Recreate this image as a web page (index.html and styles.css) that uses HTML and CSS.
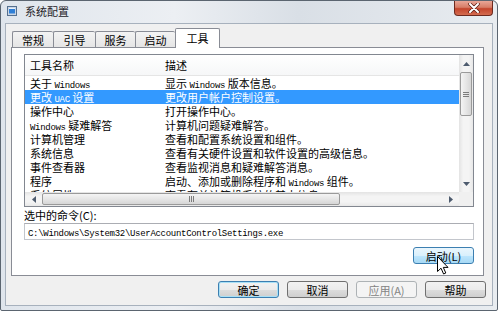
FILE: index.html
```html
<!DOCTYPE html>
<html lang="zh-CN">
<head>
    <meta charset="UTF-8">
    <title>系统配置</title>
    <link rel="stylesheet" href="styles.css">
</head>
<body>
    <div class="window">
        <div class="titlebar">
            <svg class="app-icon" width="10" height="10" viewBox="0 0 10 10">
                <rect x="0.5" y="0.5" width="9" height="9" fill="#c9d6e6" stroke="#55708f"/>
                <rect x="2" y="2.5" width="6" height="5" fill="#2f7fd6"/>
                <rect x="2" y="2" width="6" height="1" fill="#e8f0fa"/>
            </svg>
            <span class="title">系统配置</span>
            <div class="close">
                <svg width="12" height="10" viewBox="0 0 12 10">
                    <path d="M2 1 L10 9 M10 1 L2 9" stroke="#5a1a10" stroke-width="3.4" stroke-linecap="round"/>
                    <path d="M2 1 L10 9 M10 1 L2 9" stroke="#fff" stroke-width="2" stroke-linecap="round"/>
                </svg>
            </div>
        </div>

        <div class="client">
            <div class="tabs">
                <div class="tab w41">常规</div>
                <div class="tab w42">引导</div>
                <div class="tab w40">服务</div>
                <div class="tab w40">启动</div>
                <div class="tab active">工具</div>
            </div>

            <div class="panel">
                <div class="list">
                    <div class="list-main">
                        <div class="row head"><span class="c1">工具名称</span><span class="c2">描述</span></div>
                        <div class="row"><span class="c1">关于 <span class="en">Windows</span></span><span class="c2">显示 <span class="en">Windows</span> 版本信息。</span></div>
                        <div class="row selected"><span class="c1">更改 <span class="en">UAC</span> 设置</span><span class="c2">更改用户帐户控制设置。</span></div>
                        <div class="row"><span class="c1">操作中心</span><span class="c2">打开操作中心。</span></div>
                        <div class="row"><span class="c1"><span class="en">Windows</span> 疑难解答</span><span class="c2">计算机问题疑难解答。</span></div>
                        <div class="row"><span class="c1">计算机管理</span><span class="c2">查看和配置系统设置和组件。</span></div>
                        <div class="row"><span class="c1">系统信息</span><span class="c2">查看有关硬件设置和软件设置的高级信息。</span></div>
                        <div class="row"><span class="c1">事件查看器</span><span class="c2">查看监视消息和疑难解答消息。</span></div>
                        <div class="row"><span class="c1">程序</span><span class="c2">启动、添加或删除程序和 <span class="en">Windows</span> 组件。</span></div>
                        <div class="row"><span class="c1">系统属性</span><span class="c2">查看有关计算机系统的基本信息。</span></div>
                    </div>

                    <div class="vscroll">
                        <div class="arrow">
                            <svg width="7" height="4" viewBox="0 0 7 4"><polygon points="3.5,0 7,4 0,4" fill="#4d5b6e"/></svg>
                        </div>
                        <div class="thumb v">
                            <svg width="6" height="5" viewBox="0 0 6 5"><path d="M0 0.5 H6 M0 2.5 H6 M0 4.5 H6" stroke="#7c7c7c"/></svg>
                        </div>
                        <div class="track"></div>
                        <div class="arrow">
                            <svg width="7" height="4" viewBox="0 0 7 4"><polygon points="0,0 7,0 3.5,4" fill="#4d5b6e"/></svg>
                        </div>
                    </div>

                    <div class="hscroll">
                        <div class="arrow">
                            <svg width="4" height="7" viewBox="0 0 4 7"><polygon points="0,3.5 4,0 4,7" fill="#4d5b6e"/></svg>
                        </div>
                        <div class="thumb h">
                            <svg width="5" height="6" viewBox="0 0 5 6"><path d="M0.5 0 V6 M2.5 0 V6 M4.5 0 V6" stroke="#7c7c7c"/></svg>
                        </div>
                        <div class="track"></div>
                        <div class="arrow">
                            <svg width="4" height="7" viewBox="0 0 4 7"><polygon points="0,0 4,3.5 0,7" fill="#4d5b6e"/></svg>
                        </div>
                    </div>
                    <div class="corner"></div>
                </div>

                <div class="label">选中的命令(C):</div>
                <div class="command"><span class="en">C:\Windows\System32\UserAccountControlSettings.exe</span></div>
                <div class="launch-row">
                    <div class="btn hover">启动(L)</div>
                </div>
            </div>

            <div class="buttons">
                <div class="btn default">确定</div>
                <div class="btn">取消</div>
                <div class="btn disabled">应用(A)</div>
                <div class="btn">帮助</div>
            </div>
        </div>
    </div>

    <!-- mouse pointer over the launch button -->
    <svg class="cursor" width="12" height="19" viewBox="0 0 12 19">
        <path d="M0.5 0.5 L0.5 15.5 L4 12.2 L6.6 18 L8.8 17 L6.3 11.4 L11 11.4 Z" fill="#fff" stroke="#000"/>
    </svg>
</body>
</html>
```

FILE: styles.css
```css
body {
    margin: 0;
    background: #fff;
    font-family: "Noto Sans CJK SC", "Liberation Sans", sans-serif;
    font-size: 11px;
    color: #000;
}

.window {
    width: 498px;
    height: 311px;
    box-sizing: border-box;
    border: 1px solid #5b6570;
    border-radius: 6px 6px 2px 2px;
    padding: 0 4px 4px 4px;
    background: linear-gradient(90deg, #dfe5ec 0%, #eceff3 35%, #d9dfe6 60%, #e8ecf0 100%);
}

/* Title bar */
.titlebar {
    height: 22px;
    display: flex;
    align-items: center;
}
.app-icon {
    margin-left: 2px;
    margin-top: -2px;
}
.title {
    margin-left: 8px;
    font-size: 11px;
    color: #1e2228;
    line-height: 14px;
    margin-top: -2px;
}
.close {
    margin-left: auto;
    margin-right: 0;
    align-self: flex-start;
    width: 39px;
    height: 15px;
    box-sizing: border-box;
    border: 1px solid #6d2a1f;
    border-top: none;
    border-radius: 0 0 4px 4px;
    background: linear-gradient(#e9a697 0%, #d77d67 45%, #c4452c 55%, #d46c50 100%);
    display: flex;
    align-items: center;
    justify-content: center;
}

/* Client area */
.client {
    height: 283px;
    box-sizing: border-box;
    border: 1px solid #a7b1bd;
    background: #f0f0f0;
}

.tabs {
    display: flex;
    align-items: flex-end;
    height: 20px;
    padding: 4px 0 0 6px;
    margin-bottom: -1px;
}
.tab {
    height: 16px;
    box-sizing: border-box;
    margin-bottom: 1px;
    border: 1px solid #898c95;
    border-bottom: none;
    border-right: none;
    border-radius: 2px 2px 0 0;
    background: linear-gradient(#f3f3f3, #e5e5e5);
    display: flex;
    align-items: center;
    justify-content: center;
    line-height: 14px;
}
.w40 { width: 40px; }
.w41 { width: 41px; }
.w42 { width: 42px; }
.tab.active {
    width: 45px;
    height: 20px;
    margin-bottom: 0;
    border-right: 1px solid #898c95;
    background: #fff;
    position: relative;
    z-index: 1;
    padding-bottom: 1px;
}

.panel {
    width: 473px;
    height: 229px;
    box-sizing: border-box;
    margin-left: 5px;
    border: 1px solid #898c95;
    background: #fff;
    padding: 6px 9px 0 12px;
}

/* List view */
.list {
    width: 450px;
    height: 153px;
    box-sizing: border-box;
    border: 1px solid #828790;
    display: grid;
    grid-template-columns: 434px 14px;
    grid-template-rows: 137px 14px;
}
.list-main {
    overflow: hidden;
}
.row {
    height: 14px;
    line-height: 14px;
    display: flex;
    white-space: nowrap;
}
.row.head {
    height: 20px;
    line-height: 20px;
    border-bottom: 1px solid #e5e5e5;
    background: linear-gradient(#ffffff, #f6f7f8);
}
.c1 {
    width: 130px;
    padding-left: 5px;
    flex: none;
}
.c2 {
    padding-left: 5px;
}
.row.selected {
    background: #3399ff;
    color: #fff;
}
.en {
    font-family: "Liberation Mono", monospace;
    font-size: 9px;
    letter-spacing: -0.3px;
}

/* Scroll bars */
.vscroll {
    display: flex;
    flex-direction: column;
    background: linear-gradient(90deg, #e3e3e3, #f4f4f4 30%, #f4f4f4 70%, #e8e8e8);
}
.hscroll {
    display: flex;
    background: linear-gradient(#e3e3e3, #f4f4f4 30%, #f4f4f4 70%, #e8e8e8);
}
.arrow {
    flex: none;
    width: 14px;
    height: 17px;
    display: flex;
    align-items: center;
    justify-content: center;
}
.hscroll .arrow {
    width: 17px;
    height: 14px;
}
.track {
    flex: 1;
}
.thumb {
    flex: none;
    box-sizing: border-box;
    border: 1px solid #9a9a9a;
    border-radius: 2px;
    display: flex;
    align-items: center;
    justify-content: center;
}
.thumb.v {
    height: 44px;
    margin: 0 1px;
    background: linear-gradient(90deg, #f4f4f4, #e6e6e6 50%, #d6d6d6);
}
.thumb.h {
    width: 298px;
    margin: 1px 0;
    background: linear-gradient(#f4f4f4, #e6e6e6 50%, #d6d6d6);
}
.corner {
    background: #f0f0f0;
}

/* Command line */
.label {
    margin-top: 1px;
    height: 15px;
    line-height: 15px;
}
.command {
    width: 450px;
    height: 17px;
    box-sizing: border-box;
    border: 1px solid #c3c6cc;
    border-top-color: #abadb3;
    padding-left: 3px;
    line-height: 15px;
    white-space: nowrap;
}
.launch-row {
    display: flex;
    justify-content: flex-end;
    margin-top: 7px;
}

/* Buttons */
.buttons {
    display: flex;
    justify-content: flex-end;
    gap: 8px;
    padding: 5px 6px 0 0;
}
.btn {
    width: 61px;
    height: 17px;
    box-sizing: border-box;
    border: 1px solid #707070;
    border-radius: 3px;
    background: linear-gradient(#f2f2f2 0%, #ebebeb 50%, #dddddd 51%, #cfcfcf 100%);
    display: flex;
    align-items: center;
    justify-content: center;
    line-height: 14px;
}
.btn.default {
    border-color: #3c7fb1;
    box-shadow: inset 0 0 0 1px #a8e0f6;
}
.btn.hover {
    border-color: #3c7fb1;
    background: linear-gradient(#eaf6fd 0%, #d9f0fc 50%, #bee6fd 51%, #a7d9f5 100%);
}
.btn.disabled {
    border-color: #adb2b5;
    background: #f4f4f4;
    color: #838383;
}

.cursor {
    position: absolute;
    left: 437px;
    top: 256px;
}
```
